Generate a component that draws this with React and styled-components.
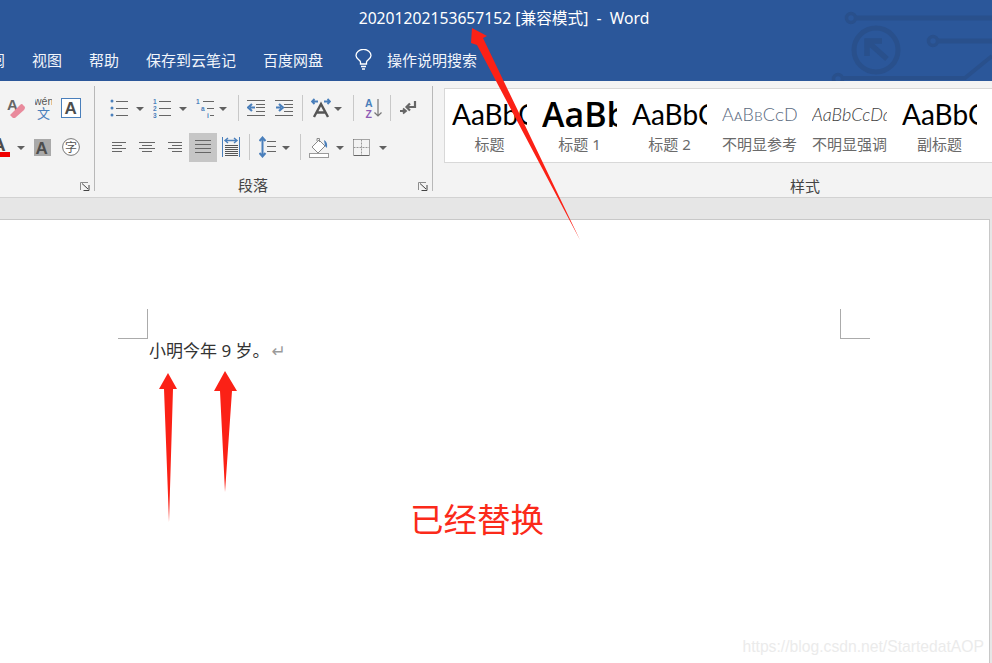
import React from "react";
import styled, { createGlobalStyle } from "styled-components";

const FONT = '"Noto Sans", "Noto Sans CJK SC", sans-serif';
const BLUE = "#4a7fbb";
const GREY = "#666666";

const GlobalStyle = createGlobalStyle`
  html, body {
    margin: 0;
    padding: 0;
    background: #e6e6e6;
    overflow: hidden;
  }
`;

const Window = styled.div`
  position: relative;
  width: 992px;
  height: 663px;
  overflow: hidden;
  font-family: ${FONT};
  display: flex;
  flex-direction: column;
`;

const Header = styled.header`
  position: relative;
  height: 81px;
  flex: none;
  background: #2b579a;
  color: #fff;
  overflow: hidden;
`;

const Title = styled.div`
  height: 37px;
  line-height: 37px;
  padding-left: 16px;
  text-align: center;
  font-size: 15.7px;
  white-space: pre;
`;

const Tabs = styled.nav`
  display: flex;
  align-items: center;
  height: 44px;
  margin-left: -25px;
  font-size: 15px;
  color: #f2f5fa;
`;

const Tab = styled.span`
  margin-right: 27px;
  white-space: nowrap;
`;

const Search = styled.div`
  display: flex;
  align-items: center;
  gap: 15px;
  margin-left: 5px;
`;

const Circuit = styled.svg`
  position: absolute;
  top: 0;
  left: 820px;
`;

const Ribbon = styled.section`
  display: flex;
  height: 116px;
  flex: none;
  background: #f3f3f3;
  border-bottom: 1px solid #d2d2d2;
  overflow: hidden;
`;

const Group = styled.div`
  flex: none;
  width: ${(p) => p.$w}px;
  height: 105px;
  margin-top: 5px;
  padding-top: 7px;
  box-sizing: border-box;
  border-right: 1px solid #b8b8b8;
  display: flex;
  flex-direction: column;
`;

const Row = styled.div`
  display: flex;
  flex: none;
  align-items: center;
  height: 30px;
  margin-bottom: 9px;
  padding-left: ${(p) => p.$pl}px;
`;

const Tool = styled.div`
  flex: none;
  display: flex;
  align-items: center;
  justify-content: ${(p) => (p.$active ? "center" : "space-between")};
  width: ${(p) => p.$w}px;
  height: ${(p) => (p.$active ? "29px" : "auto")};
  margin-left: ${(p) => p.$ml || 0}px;
  background: ${(p) => (p.$active ? "#c6c6c6" : "transparent")};
  svg {
    display: block;
    flex: none;
  }
`;

const Caret = styled.i`
  flex: none;
  width: 0;
  height: 0;
  border-left: 4px solid transparent;
  border-right: 4px solid transparent;
  border-top: 4px solid #606060;
  margin-top: 2px;
`;

const Divider = styled.span`
  flex: none;
  width: 1px;
  height: 26px;
  margin-left: ${(p) => p.$ml}px;
  background: #c8c8c8;
`;

const GroupFooter = styled.div`
  display: flex;
  flex: none;
  align-items: center;
  height: 13px;
  margin-top: 7px;
  padding-right: 4px;
`;

const GroupLabel = styled.span`
  margin-left: ${(p) => p.$ml}px;
  font-size: 15px;
  color: #444;
`;

const Launcher = styled.svg`
  display: block;
  margin-left: auto;
  margin-top: 4px;
`;

const StylesGroup = styled.div`
  flex: 1;
  min-width: 0;
  padding: 7px 0 0 11px;
  display: flex;
  flex-direction: column;
`;

const Gallery = styled.div`
  display: flex;
  flex: none;
  width: 600px;
  height: 75px;
  box-sizing: border-box;
  background: #fff;
  border: 1px solid #d8d8d8;
  padding-left: 7px;
`;

const StyleCell = styled.div`
  flex: none;
  width: 75px;
  margin-right: 15px;
  display: flex;
  flex-direction: column;
  align-items: center;
`;

const Preview = styled.div`
  width: 75px;
  height: 40px;
  margin-top: 5px;
  line-height: 40px;
  overflow: hidden;
  white-space: nowrap;
  font-family: ${(p) => p.$family};
  font-size: ${(p) => p.$size}px;
  font-weight: ${(p) => p.$weight};
  font-style: ${(p) => p.$slant};
  color: ${(p) => p.$color};
`;

const StyleName = styled.div`
  font-size: 15px;
  line-height: 20px;
  margin-top: 0;
  color: #6a6a6a;
  white-space: nowrap;
`;

const StylesFooter = styled.div`
  height: 20px;
  margin-top: 13px;
  padding-left: 346px;
  font-size: 15px;
  line-height: 20px;
  color: #444;
`;

const Canvas = styled.main`
  flex: 1;
  padding: 21px 2px 0 0;
  background: #e6e6e6;
`;

const Page = styled.div`
  position: relative;
  height: 100%;
  box-sizing: border-box;
  padding: 119px 0 0 149px;
  background: #fff;
  border-top: 1px solid #c8c8c8;
  border-right: 1px solid #c8c8c8;
`;

const Line = styled.p`
  margin: 0;
  font-size: 17px;
  line-height: 24px;
  color: #333;
  white-space: pre;
`;

const ReturnMark = styled.span`
  color: #9a9a9a;
  font-family: "DejaVu Sans", sans-serif;
  font-size: 17px;
  margin-left: 2px;
`;

const CropMark = styled.span`
  position: absolute;
  top: 89px;
  left: ${(p) => p.$x}px;
  width: 29px;
  height: 29px;
  border-bottom: 1px solid #ababab;
  border-${(p) => p.$side}: 1px solid #ababab;
`;

const Caption = styled.div`
  position: absolute;
  left: 410px;
  top: 277px;
  font-size: 33.5px;
  line-height: 44px;
  color: #fb2a1a;
  white-space: nowrap;
`;

const Watermark = styled.div`
  position: absolute;
  right: 5px;
  bottom: 7px;
  font-family: "Liberation Sans", Arial, sans-serif;
  font-size: 15.7px;
  color: #ebebeb;
  white-space: nowrap;
`;

const Arrows = styled.svg`
  position: absolute;
  top: 0;
  left: 0;
  pointer-events: none;
`;

const Ico = ({ w, h = 20, children }) => (
  <svg width={w} height={h} viewBox={`0 0 ${w} ${h}`}>
    {children}
  </svg>
);

const Lines = ({ x1 = 0, x2, ys, color = GREY, sw = 1 }) => (
  <path d={ys.map((y) => `M${x1} ${y + 0.5}H${x2}`).join("")} stroke={color} strokeWidth={sw} fill="none" />
);

const glyph = { fontFamily: "'Liberation Sans', sans-serif", fontWeight: 700 };

const Eraser = () => (
  <Ico w={18} h={22}>
    <text x="0" y="13" fontSize="15" fill={GREY} style={glyph}>A</text>
    <path d="M3 18 L13 8 Q15 6 16 8 L18 10 Q18 12 17 13 L8 21 L6 21Z" fill="#e98a9c" />
  </Ico>
);

const Wen = () => (
  <Ico w={17} h={24}>
    <text x="-1" y="9" fontSize="10.5" fill="#555" fontFamily="'Liberation Sans', sans-serif">wén</text>
    <text x="2" y="22" fontSize="13" fill={BLUE} fontFamily="'Noto Sans CJK SC', sans-serif">文</text>
  </Ico>
);

const BoxedA = () => (
  <Ico w={20} h={20}>
    <rect x="0.5" y="0.5" width="19" height="19" fill="#fff" stroke={BLUE} />
    <text x="3.5" y="16" fontSize="17" fill="#4d4d4d" style={glyph}>A</text>
  </Ico>
);

const RedA = () => (
  <Ico w={18} h={22}>
    <text x="0" y="15" fontSize="19" fill="#4d4d4d" style={glyph}>A</text>
    <rect x="0" y="16" width="18" height="5" fill="#f00000" />
  </Ico>
);

const ShadedA = () => (
  <Ico w={17} h={17}>
    <rect width="17" height="17" fill="#a9a9a9" />
    <text x="1.5" y="15" fontSize="17" fill="#4d4d4d" style={glyph}>A</text>
  </Ico>
);

const Enclosed = () => (
  <Ico w={18} h={18}>
    <circle cx="9" cy="9" r="8.4" fill="#fff" stroke="#777" />
    <text x="3" y="13.5" fontSize="12" fill="#555" fontFamily="'Noto Sans CJK SC', sans-serif">字</text>
  </Ico>
);

const Bullets = () => (
  <Ico w={18} h={20}>
    <circle cx="2" cy="3" r="1.5" fill={BLUE} />
    <circle cx="2" cy="10" r="1.5" fill={BLUE} />
    <circle cx="2" cy="17" r="1.5" fill={BLUE} />
    <Lines x1={6} x2={18} ys={[3, 10, 17]} />
  </Ico>
);

const numText = { fontFamily: "'Liberation Sans', sans-serif", fontWeight: 700, fontSize: 6.5 };

const Numbered = () => (
  <Ico w={18} h={20}>
    <text x="0" y="6" fill={BLUE} style={numText}>1</text>
    <text x="0" y="13" fill={BLUE} style={numText}>2</text>
    <text x="0" y="20" fill={BLUE} style={numText}>3</text>
    <Lines x1={6} x2={18} ys={[3, 10, 17]} />
  </Ico>
);

const Multilevel = () => (
  <Ico w={18} h={20}>
    <text x="0" y="6" fill={BLUE} style={numText}>1</text>
    <text x="5" y="13" fill={BLUE} style={numText}>a</text>
    <text x="11" y="20" fill={BLUE} style={numText}>i</text>
    <path d="M7 3.5H18M11 10.5H18M14 17.5H18" stroke={GREY} fill="none" />
  </Ico>
);

const Indent = ({ flip }) => (
  <Ico w={18} h={18}>
    <Lines x2={18} ys={[1, 16]} />
    <Lines x1={9} x2={18} ys={[5, 8, 12]} />
    <path
      d={flip ? "M1 8.5H6M4 5L8 8.5L4 12" : "M8 8.5H3M5 5L1 8.5L5 12"}
      stroke={BLUE}
      strokeWidth="2.2"
      fill="none"
    />
  </Ico>
);

const Direction = () => (
  <Ico w={20} h={20}>
    <path d="M1 3.5H7M3.5 1L1 3.5L3.5 6M13 3.5H19M16.5 1L19 3.5L16.5 6" stroke={BLUE} strokeWidth="1.8" fill="none" />
    <path d="M3 19L10 6L17 19M6 14.5H14" stroke="#555" strokeWidth="2.4" fill="none" />
  </Ico>
);

const Sort = () => (
  <Ico w={17} h={20}>
    <text x="0" y="9" fontSize="10.5" fill={BLUE} style={glyph}>A</text>
    <text x="0.5" y="19.5" fontSize="10.5" fill="#8e5bb5" style={glyph}>Z</text>
    <path d="M13 1V18M9.5 14.5L13 18L16.5 14.5" stroke="#777" strokeWidth="1.2" fill="none" />
  </Ico>
);

const ParagraphMark = () => (
  <Ico w={17} h={16}>
    <path d="M15 1V7H7M10 3.5L6.5 7L10 10.5" stroke="#666" strokeWidth="2.2" fill="none" />
    <path d="M0 11H5M3 8.5L6 11L3 13.5" stroke="#666" strokeWidth="1.8" fill="none" />
  </Ico>
);

const AlignLeft = () => (
  <Ico w={14} h={13}>
    <Lines x2={14} ys={[1, 7]} />
    <Lines x2={10} ys={[4, 10]} />
  </Ico>
);

const AlignCenter = () => (
  <Ico w={16} h={13}>
    <Lines x2={16} ys={[1, 7]} />
    <Lines x1={3} x2={13} ys={[4, 10]} />
  </Ico>
);

const AlignRight = () => (
  <Ico w={14} h={13}>
    <Lines x2={14} ys={[1, 7]} />
    <Lines x1={4} x2={14} ys={[4, 10]} />
  </Ico>
);

const Justify = () => (
  <Ico w={16} h={14}>
    <Lines x2={16} ys={[0, 4, 8, 12]} />
  </Ico>
);

const Distribute = () => (
  <Ico w={18} h={20}>
    <path d="M.5 0V20M17.5 0V20" stroke={BLUE} fill="none" />
    <path d="M3 3.5H15M6 1L3 3.5L6 6M12 1L15 3.5L12 6" stroke={BLUE} strokeWidth="1.4" fill="none" />
    <Lines x1={3} x2={16} ys={[8, 10, 12, 14, 16, 18]} sw={1} color="#555" />
  </Ico>
);

const LineSpacing = () => (
  <Ico w={17} h={22}>
    <path d="M3.5 1V21M.5 5L3.5 1.5L6.5 5M.5 17L3.5 20.5L6.5 17" stroke={BLUE} strokeWidth="2" fill="none" />
    <Lines x1={8} x2={17} ys={[5, 10, 15]} />
  </Ico>
);

const Shading = () => (
  <Ico w={20} h={21}>
    <path d="M3 10L10 3L16 9L9 16Z" fill="#fff" stroke="#8a8a8a" />
    <path d="M8 4V1.5H10.5V5" fill="none" stroke="#8a8a8a" />
    <path d="M15 3Q19 5 18 11L16 9Z" fill={BLUE} />
    <rect x=".5" y="16.5" width="19" height="4" fill="#fff" stroke="#9a9a9a" />
  </Ico>
);

const Borders = () => (
  <Ico w={17} h={17}>
    <path d="M.5 .5H16.5V16.5M.5 .5V16.5" stroke="#555" strokeDasharray="1 1" fill="none" />
    <path d="M8.5 .5V16.5M.5 8.5H16.5" stroke="#999" strokeDasharray="2 1" fill="none" />
    <path d="M.5 16.5H16.5" stroke="#666" fill="none" />
  </Ico>
);

const Bulb = () => (
  <svg width="17" height="21" viewBox="0 0 17 21" fill="none" stroke="#fff" strokeWidth="1.3">
    <path d="M5.5 15V13C5 11 1 10 1 6.5A7.3 6 0 0 1 16 6.5C16 10 12 11 11.5 13V15Z" />
    <path d="M6 17.5H11M7 20H10" />
  </svg>
);

const DialogLauncher = () => (
  <Launcher width="10" height="9" viewBox="0 0 10 9">
    <path d="M.5 8V.5H8" stroke="#8c8c8c" fill="none" />
    <path d="M2 1.5L8 7M9 3V8.5H3.5" stroke="#444" fill="none" />
  </Launcher>
);

const SANS = '"Open Sans", sans-serif';
const LATO = "Lato, sans-serif";

const styleItems = [
  { name: "标题", family: LATO, size: 28, weight: 400, slant: "normal", color: "#000", sample: "AaBbCcDd" },
  { name: "标题 1", family: SANS, size: 34, weight: 600, slant: "normal", color: "#000", sample: "AaBbCcDd" },
  { name: "标题 2", family: LATO, size: 28, weight: 400, slant: "normal", color: "#000", sample: "AaBbCcDd" },
  { name: "不明显参考", family: LATO, size: 18, weight: 300, slant: "normal", color: "#5a6a80", sample: "AᴀBʙCᴄDᴅ" },
  { name: "不明显强调", family: LATO, size: 18, weight: 300, slant: "italic", color: "#404040", sample: "AaBbCcDdEe" },
  { name: "副标题", family: LATO, size: 28, weight: 400, slant: "normal", color: "#000", sample: "AaBbCcDd" },
];

export default function App() {
  return (
    <Window>
      <GlobalStyle />
      <Header>
        <Circuit width="172" height="81" viewBox="0 0 172 81" fill="none" stroke="#29508c" strokeWidth="5">
          <circle cx="31" cy="18" r="4.5" strokeWidth="3.5" />
          <path d="M36 18H172" />
          <circle cx="56" cy="50" r="22" />
          <path d="M47 56V41H62M48 42L67 59" strokeWidth="5.5" />
          <circle cx="113" cy="41" r="4.5" strokeWidth="3.5" />
          <path d="M118 41H172" />
          <circle cx="18" cy="79" r="4.5" strokeWidth="3.5" />
          <path d="M23 78H145L172 56" strokeWidth="4" />
        </Circuit>
        <Title>20201202153657152 [兼容模式]  -  Word</Title>
        <Tabs>
          <Tab>审阅</Tab>
          <Tab>视图</Tab>
          <Tab>帮助</Tab>
          <Tab>保存到云笔记</Tab>
          <Tab>百度网盘</Tab>
          <Search>
            <Bulb />
            <span>操作说明搜索</span>
          </Search>
        </Tabs>
      </Header>

      <Ribbon>
        <Group $w={95}>
          <Row $pl={7}>
            <Tool $w={18}><Eraser /></Tool>
            <Tool $w={17} $ml={10}><Wen /></Tool>
            <Tool $w={20} $ml={9}><BoxedA /></Tool>
          </Row>
          <Row $pl={0}>
            <Tool $w={33} $ml={-8}><RedA /><Caret /></Tool>
            <Tool $w={17} $ml={9}><ShadedA /></Tool>
            <Tool $w={18} $ml={11}><Enclosed /></Tool>
          </Row>
          <GroupFooter>
            <DialogLauncher />
          </GroupFooter>
        </Group>

        <Group $w={338}>
          <Row $pl={15}>
            <Tool $w={34}><Bullets /><Caret /></Tool>
            <Tool $w={34} $ml={9}><Numbered /><Caret /></Tool>
            <Tool $w={31} $ml={9}><Multilevel /><Caret /></Tool>
            <Divider $ml={11} />
            <Tool $w={18} $ml={8}><Indent /></Tool>
            <Tool $w={18} $ml={10}><Indent flip /></Tool>
            <Divider $ml={9} />
            <Tool $w={31} $ml={8}><Direction /><Caret /></Tool>
            <Divider $ml={11} />
            <Tool $w={17} $ml={11}><Sort /></Tool>
            <Divider $ml={8} />
            <Tool $w={17} $ml={9}><ParagraphMark /></Tool>
          </Row>
          <Row $pl={17}>
            <Tool $w={14}><AlignLeft /></Tool>
            <Tool $w={16} $ml={13}><AlignCenter /></Tool>
            <Tool $w={14} $ml={13}><AlignRight /></Tool>
            <Tool $w={28} $ml={7} $active><Justify /></Tool>
            <Tool $w={18} $ml={5}><Distribute /></Tool>
            <Divider $ml={9} />
            <Tool $w={31} $ml={9}><LineSpacing /><Caret /></Tool>
            <Divider $ml={10} />
            <Tool $w={35} $ml={8}><Shading /><Caret /></Tool>
            <Tool $w={34} $ml={9}><Borders /><Caret /></Tool>
          </Row>
          <GroupFooter>
            <GroupLabel $ml={143}>段落</GroupLabel>
            <DialogLauncher />
          </GroupFooter>
        </Group>

        <StylesGroup>
          <Gallery>
            {styleItems.map((item) => (
              <StyleCell key={item.name}>
                <Preview
                  $family={item.family}
                  $size={item.size}
                  $weight={item.weight}
                  $slant={item.slant}
                  $color={item.color}
                >
                  {item.sample}
                </Preview>
                <StyleName>{item.name}</StyleName>
              </StyleCell>
            ))}
          </Gallery>
          <StylesFooter>样式</StylesFooter>
        </StylesGroup>
      </Ribbon>

      <Canvas>
        <Page>
          <CropMark $x={118} $side="right" />
          <CropMark $x={840} $side="left" />
          <Line>
            小明今年 9 岁。<ReturnMark>↵</ReturnMark>
          </Line>
          <Caption>已经替换</Caption>
          <Watermark>https://blog.csdn.net/StartedatAOP</Watermark>
        </Page>
      </Canvas>

      <Arrows width="992" height="663" viewBox="0 0 992 663" fill="#fb2116">
        <path d="M472 28L487 36L483 38L580 240L477 45L471 43Z" />
        <path d="M168 373L177 389L173 389L169 522L164 389L159 389Z" />
        <path d="M225 371L237 391L232 391L225 492L220 391L214 391Z" />
      </Arrows>
    </Window>
  );
}
